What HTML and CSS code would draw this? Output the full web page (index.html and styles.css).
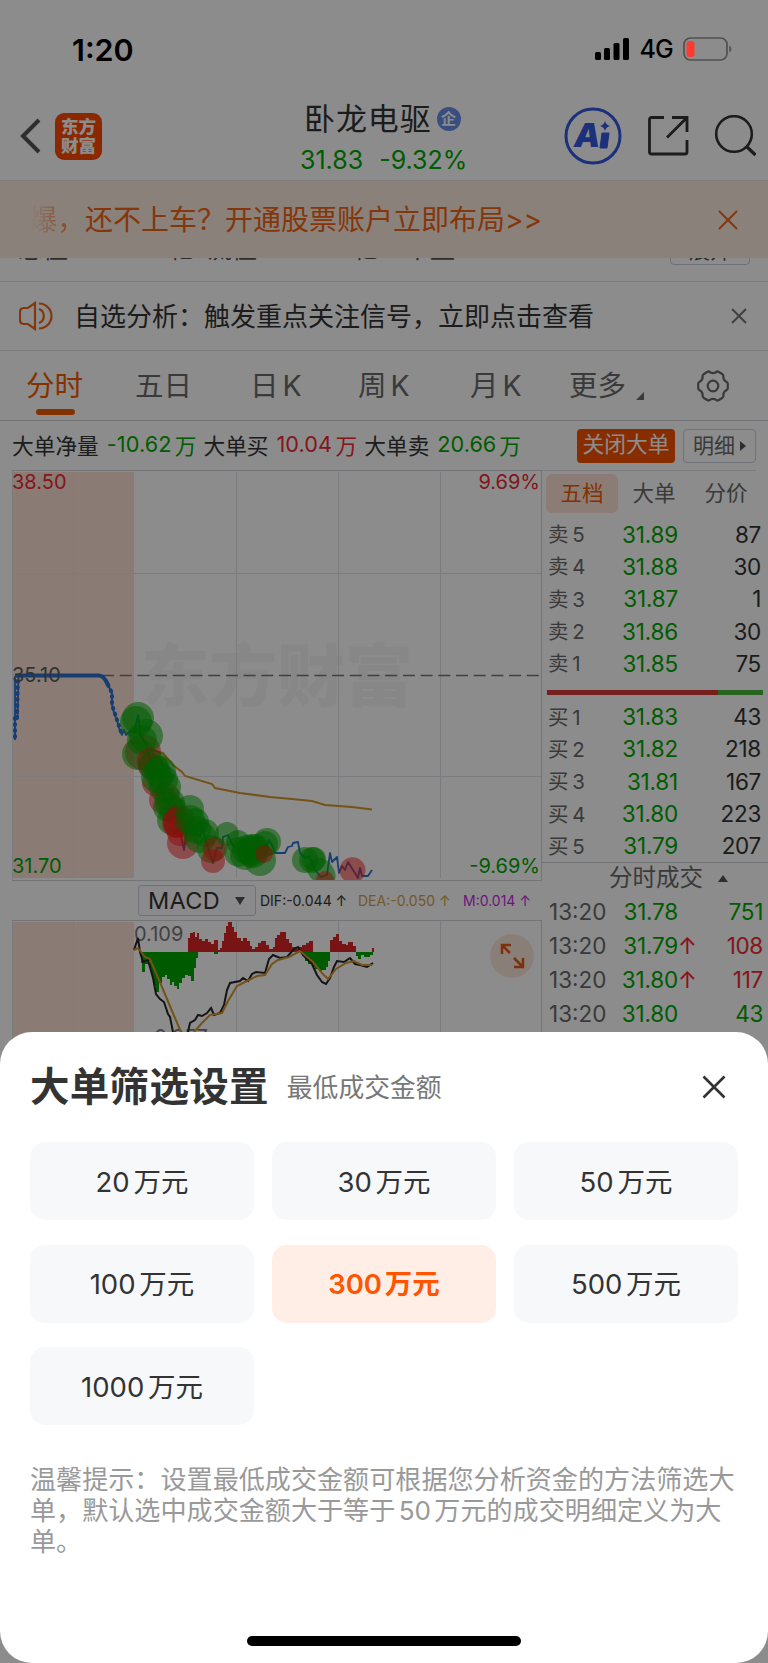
FILE: index.html
```html
<!DOCTYPE html>
<html lang="zh-CN">

<head>
    <meta charset="UTF-8">
    <meta name="viewport" content="width=device-width, initial-scale=1.0">
    <title>卧龙电驱</title>
    <link rel="stylesheet" href="styles.css">
</head>

<body>

    <div class="phone">
        <div class="status">
            <span class="status__time">1:20</span>
            <div class="status__right">
                <svg width="35" height="22" viewBox="0 0 35 22">
                    <rect x="0" y="14" width="6" height="8" rx="1.5" />
                    <rect x="9" y="10" width="6" height="12" rx="1.5" />
                    <rect x="18.500" y="5" width="6" height="17" rx="1.500" />
                    <rect x="28" y="0" width="6" height="22" rx="1.500" />
                </svg>
                <span class="status__net">4G</span>
                <svg width="50" height="24" viewBox="0 0 50 24">
                    <rect x="1" y="1" width="43" height="22" rx="6.500" fill="none" stroke="#505050" stroke-width="1.700" />
                    <rect x="3.500" y="4" width="8" height="16" rx="3" fill="#ff3b30" />
                    <path d="M46.300 8.500a4 4 0 0 1 0 7z" fill="#505050" />
                </svg>
            </div>
        </div>

        <div class="header">
            <svg class="header__back" width="22" height="36" viewBox="0 0 22 36">
                <path d="M19 2 3 18l16 16" fill="none" stroke="#555" stroke-width="4" />
            </svg>
            <div class="logo">东方<br>财富</div>
            <div class="header__stock">
                <div class="header__name">卧龙电驱<span class="badge">企</span></div>
                <div class="header__price"><span>31.83</span><span>-9.32%</span></div>
            </div>
            <div class="header__icons">
                <svg width="58" height="58" viewBox="0 0 58 58">
                    <circle cx="29" cy="29" r="27" fill="none" stroke="#3458e0" stroke-width="3" />
                    <text x="10" y="40" class="ai">A</text>
                    <path d="M38 26h7l-2 15h-7z" fill="#3458e0" stroke="#3458e0" stroke-width="1" stroke-linejoin="round" />
                    <path d="M41 14q1 4 5 5-4 1-5 5-1-4-5-5 4-1 5-5z" fill="#3458e0" />
                </svg>
                <svg width="42" height="42" viewBox="0 0 42 42" fill="none" stroke="#333" stroke-width="2.800">
                    <path d="M17 2.500H4.500a2 2 0 0 0-2 2V37a2 2 0 0 0 2 2H38a2 2 0 0 0 2-2V25M25 2.500h15V17M39.500 3 20 22.500" />
                </svg>
                <svg width="42" height="42" viewBox="0 0 42 42" fill="none" stroke="#333" stroke-width="2.600">
                    <circle cx="20" cy="19" r="17.800" />
                    <path d="m32 31 9.500 9" stroke-width="3.200" />
                </svg>
            </div>
        </div>

        <div class="banner">
            <p class="banner__text"><span class="banner__fade">爆，</span>还不上车？开通股票账户立即布局&gt;&gt;</p>
            <svg width="20" height="20" viewBox="0 0 20 20">
                <path d="m1 1 18 18M19 1 1 19" stroke="#f06414" stroke-width="2" />
            </svg>
        </div>

        <div class="quote">
            <div class="quote__row">
                <span class="quote__a">总值</span>
                <span class="quote__b">10.12亿</span>
                <span class="quote__c">流值</span>
                <span class="quote__d">亿</span>
                <span class="quote__e">市盈</span>
                <span class="quote__btn">展开</span>
            </div>
        </div>

        <div class="notice">
            <svg width="34" height="30" viewBox="0 0 34 30" fill="none" stroke="#f06414" stroke-width="2.200">
                <path d="M16 2v26l-7-5H5q-4 0-4-4v-8q0-4 4-4h4z" />
                <path d="M20 8a7.500 7.500 0 0 1 0 14M20 2.500a12.500 12.500 0 0 1 0 25" />
            </svg>
            <p>自选分析：触发重点关注信号，立即点击查看</p>
            <svg width="16" height="16" viewBox="0 0 16 16">
                <path d="m1 1 14 14M15 1 1 15" stroke="#777" stroke-width="2" />
            </svg>
        </div>

        <div class="tabs">
            <span class="tabs__item tabs__item--on">分时</span>
            <span class="tabs__item">五日</span>
            <span class="tabs__item">日 K</span>
            <span class="tabs__item">周 K</span>
            <span class="tabs__item">月 K</span>
            <span class="tabs__item tabs__item--more">更多</span>
            <svg class="tabs__gear" width="32" height="32" viewBox="0 0 32 32" fill="none" stroke="#6b6b6b" stroke-width="2.200" stroke-linejoin="round">
                <path d="M10.500 1.800Q12 1 13 2.300q3 1.700 6 0 1-1.300 2.500-.5l4 2.500q1.200.8.800 2.500 0 3.500 3 5 1.500.7 1.500 2v4.400q0 1.300-1.500 2-3 1.500-3 5 .4 1.700-.8 2.500l-4 2.500q-1.500.8-2.500-.5-3-1.700-6 0-1 1.300-2.500.5l-4-2.500Q5.300 26.900 5.700 25.200q0-3.500-3-5-1.500-.7-1.500-2v-4.400q0-1.300 1.500-2 3-1.500 3-5-.4-1.700.8-2.500z" />
                <circle cx="16" cy="16" r="5.300" />
            </svg>
        </div>

        <div class="big">
            <span>大单净量</span><b class="down big__n1">-10.62</b><b class="down">万</b>
            <span>大单买</span><b class="up big__n2">10.04</b><b class="up">万</b>
            <span>大单卖</span><b class="down big__n3">20.66</b><b class="down">万</b>
            <div class="big__btns">
                <span class="btn btn--on">关闭大单</span>
                <span class="btn btn--detail">明细<i></i></span>
            </div>
        </div>

        <div class="main">
            <div class="charts">
                <svg class="chart" width="530" height="411" viewBox="0 0 530 411">
                    <rect x="1" y="2" width="121" height="406" fill="#fbe1d6" />
                    <text x="129" y="231" class="watermark">东方财富</text>
                    <path class="grid" d="M.5 0v410M61.500 2v406M224.500 2v406M326.500 2v406M428.500 2v406M0 103.500h530M0 306.500h530" />
                    <path class="frame" d="M0 .5h530M529.500 0v411M0 410.500h530" />
                    <path d="M88 205.500h442" stroke="#757575" stroke-width="1.300" stroke-dasharray="12 5.700" stroke-dashoffset="-2" />
                    <!-- 均价线 -->
                    <path class="avg" d="M126 262 140 280 151 283 161 295 170 302 173 306 200 314 203 318 228 323 258 327 280 329 300 331 313 335 340 337 360 339.500" />
                    <!-- 分时线 -->
                    <path class="price" d="M3 205.500H87q5 0 9 9.500L100 223V235L102 243 105 250 107 258 110 265 112 260 114 265 118 261 122 263 126 245 129 266 133 272 138 290 145 302 150 320 156 334 162 340 167 358 172 380 176 350 182 360 188 367 190 357 194 372 201 393 205 378 210 378 211 367 216 365 220 374 226 380 232 372 239 384 246 378 250 384 257 370 261 377 263 383 273 383 276 377 280 376 281 373 286 372 288 383 293 388 297 386 303 400 309 407 315 405 318 383 320 392 325 387 327 403 330 396 333 400 336 392 341 400 346 408 348 398 350 406 356 406 360 400" />
                    <path class="price price--bold" d="M3 205.500H87q5 0 9 9.500" />
                    <path class="price" d="M3 270V206M5.500 248 6.500 206" />
                    <path class="price price--dots" d="M96 215 100 223V235L105 250 110 265M3 248v22M5 248 6 206" />
                    <g class="buy">
                        <circle cx="131" cy="282" r="18" />
                        <circle cx="143" cy="313" r="13" />
                        <circle cx="151" cy="330" r="14" />
                        <circle cx="155" cy="326" r="13" />
                        <circle cx="171" cy="373" r="16" />
                        <circle cx="168" cy="363" r="13" />
                    </g>
                    <g class="sell">
                        <circle cx="126" cy="248" r="16" />
                        <circle cx="124" cy="252" r="16" />
                        <circle cx="134" cy="266" r="17" />
                        <circle cx="130" cy="270" r="15" />
                        <circle cx="126" cy="284" r="16" />
                    </g>
                    <g class="buy">
                        <circle cx="138" cy="291" r="13" />
                        <circle cx="139" cy="296" r="13" />
                    </g>
                    <g class="sell">
                        <circle cx="141" cy="295" r="15" />
                        <circle cx="148" cy="302" r="16" />
                        <circle cx="146" cy="298" r="12" />
                        <circle cx="145" cy="307" r="16" />
                        <circle cx="151" cy="310" r="15" />
                        <circle cx="153" cy="317" r="16" />
                        <circle cx="158" cy="333" r="15" />
                        <circle cx="156" cy="337" r="15" />
                        <circle cx="161" cy="340" r="14" />
                        <circle cx="160" cy="350" r="15" />
                    </g>
                    <g class="buy">
                        <circle cx="165" cy="353" r="15" />
                        <circle cx="167" cy="351" r="16" />
                        <circle cx="163" cy="357" r="11" />
                    </g>
                    <g class="sell">
                        <circle cx="178" cy="339" r="14" />
                        <circle cx="183" cy="352" r="14" />
                        <circle cx="178" cy="350" r="15" />
                        <circle cx="185" cy="360" r="14" />
                        <circle cx="193" cy="363" r="14" />
                        <circle cx="188" cy="367" r="16" />
                        <circle cx="199" cy="379" r="14" />
                    </g>
                    <g class="buy">
                        <circle cx="203" cy="379" r="12" />
                        <circle cx="201" cy="391" r="12" />
                    </g>
                    <g class="sell">
                        <circle cx="215" cy="364" r="12" />
                        <circle cx="226" cy="372" r="12" />
                        <circle cx="227" cy="382" r="15" />
                        <circle cx="235" cy="380" r="15" />
                        <circle cx="233" cy="385" r="15" />
                        <circle cx="241" cy="382" r="16" />
                        <circle cx="240" cy="380" r="16" />
                        <circle cx="243" cy="378" r="14" />
                        <circle cx="248" cy="390" r="16" />
                        <circle cx="255" cy="372" r="14" />
                        <circle cx="253" cy="374" r="13" />
                        <circle cx="293" cy="390" r="13" />
                        <circle cx="300" cy="390" r="13" />
                        <circle cx="302" cy="389" r="12" />
                        <path d="M294 398a14 14 0 0 1 26-2q5 7 3 14h-22q-5-4-7-12z" />
                    </g>
                    <g class="buy">
                        <circle cx="252" cy="384" r="9" />
                        <path d="M304 410a9 9 0 1 1 18 0z" />
                        <path d="M332 410a13 13 0 1 1 17 0z" />
                    </g>
                    <text x="0" y="19" class="up">38.50</text>
                    <text x="0" y="212" fill="#5c5c5c">35.10</text>
                    <text x="0" y="403" class="down">31.70</text>
                    <text x="528" y="19" class="up" text-anchor="end">9.69%</text>
                    <text x="528" y="403" class="down" text-anchor="end">-9.69%</text>
                </svg>

                <div class="macd">
                    <span class="macd__select">MACD<i></i></span>
                    <span class="macd__dif">DIF:-0.044 ↑</span>
                    <span class="macd__dea">DEA:-0.050 ↑</span>
                    <span class="macd__m">M:0.014 ↑</span>
                </div>

                <svg class="chart" width="530" height="125" viewBox="0 1 530 125">
                    <rect x="1" y="3" width="121" height="124" fill="#fbe1d6" />
                    <path class="grid" d="M.5 1v125M61.500 2v125M224.500 2v125M326.500 2v125M428.500 2v125" />
                    <path class="frame" d="M0 1.500h530M529.500 1v125" />
                    <text x="122" y="22" fill="#777">0.109</text>
                    <text x="133" y="125" fill="#777">-0.257</text>
                    <path fill="#dc2626" d="M176 33V19h2V14h3V13h2V18h2V14h2V20h3V22h3V20h3V23h3V25h3V21h4V33zM205 33V31h3V29h2V22h2V14h2V7h2V3h4V8h2V13h3V19h4V22h2V19h4V22h3V27h2V30h3V28h3V24h3V22h5V26h3V30h4V28h2V19h2V16h3V13h6V20h3V24h3V28h4V30h3V28h3V26h4V24h3V22h4V33zM318 33V21h3V18h3V15h3V22h3V25h4V26h2V23h5V27h3V33zM360 33V29h2v4z" />
                    <path fill="#00a400" d="M129 33V44h1v9h3V45h3V42h2V51h2V58h2V67h2V73h3V64h3V58h3V56h2V60h3V66h2V63h2V67h3V70h2V64h3V59h3V56h3V57h3V62h3V49h2V39h2V33zM202 33v2h4V33zM290 33V37h3V42h3V45h4V48h3V50h4V52h3V51h4V48h2V42h2V33zM344 33V37h2V40h3V36h3V38h6V36h3V33z" />
                    <path fill="none" stroke="#262626" stroke-width="2" d="M122 31 126 19 128 33 131 43 136 41 141 59 144 75 148 80 152 83 156 95 158 98 161 113M176 113 178 104 183 101 186 96 190 97 195 94 199 89 202 96 208 94 212 86 215 71 218 64 228 62 231 59 236 62 240 55 244 53 253 54 257 40 261 36 268 39 275 38 282 30 286 28 291 36 300 45 305 56 310 63 314 65 318 59 322 48 325 42 332 43 338 39 343 45 348 46 355 48 361 44" />
                    <path fill="none" stroke="#d2972c" stroke-width="2" d="M122 31 126 29 133 38 138 40 150 68 160 92 169 113M182 113 190 104 198 96 210 94 216 82 225 67 235 62 245 57 253 56 260 45 266 41 277 38 288 32 301 43 310 54 316 60 324 50 334 44 342 42 350 46 360 46" />
                    <circle cx="500" cy="37" r="22" fill="#fbe6dc" />
                    <path d="M490 35v-9h9M490 26l8 8M511 39v9h-9M511 48l-9-9" fill="none" stroke="#e05a14" stroke-width="2.500" />
                </svg>
            </div>

            <div class="book">
                <div class="book__tabs"><span class="on">五档</span><span>大单</span><span>分价</span></div>
                <div class="book__row"><span>卖 5</span><em>31.89</em><b>87</b></div>
                <div class="book__row"><span>卖 4</span><em>31.88</em><b>30</b></div>
                <div class="book__row"><span>卖 3</span><em>31.87</em><b>1</b></div>
                <div class="book__row"><span>卖 2</span><em>31.86</em><b>30</b></div>
                <div class="book__row"><span>卖 1</span><em>31.85</em><b>75</b></div>
                <div class="book__bar"></div>
                <div class="book__row"><span>买 1</span><em>31.83</em><b>43</b></div>
                <div class="book__row"><span>买 2</span><em>31.82</em><b>218</b></div>
                <div class="book__row"><span>买 3</span><em>31.81</em><b>167</b></div>
                <div class="book__row"><span>买 4</span><em>31.80</em><b>223</b></div>
                <div class="book__row"><span>买 5</span><em>31.79</em><b>207</b></div>
                <div class="book__title">分时成交<i></i></div>
                <div class="deal"><span>13:20</span><em>31.78</em><b class="down">751</b></div>
                <div class="deal"><span>13:20</span><em>31.79</em><i>↑</i><b class="up">108</b></div>
                <div class="deal"><span>13:20</span><em>31.80</em><i>↑</i><b class="up">117</b></div>
                <div class="deal"><span>13:20</span><em>31.80</em><b class="down">43</b></div>
            </div>
        </div>

        <div class="mask"></div>

        <div class="sheet">
            <div class="sheet__head">
                <h2>大单筛选设置</h2>
                <span>最低成交金额</span>
                <svg width="24" height="24" viewBox="0 0 24 24">
                    <path d="m1.500 1.500 21 21M22.500 1.500l-21 21" stroke="#333" stroke-width="2.600" />
                </svg>
            </div>
            <div class="sheet__grid">
                <button>20 万元</button>
                <button>30 万元</button>
                <button>50 万元</button>
                <button>100 万元</button>
                <button class="on">300 万元</button>
                <button>500 万元</button>
                <button>1000 万元</button>
            </div>
            <p class="sheet__tip">温馨提示：设置最低成交金额可根据您分析资金的方法筛选大<br>单，默认选中成交金额大于等于 50 万元的成交明细定义为大<br>单。</p>
            <div class="sheet__home"></div>
        </div>
    </div>

</body>

</html>
```
FILE: styles.css
```css
* {
    box-sizing: border-box;
}

body {
    margin: 0;
    font-family: Inter, "Noto Sans CJK SC", sans-serif;
    color: #333;
    background: #fff;
}

p,
h2 {
    margin: 0;
}

b,
em,
i {
    font-weight: 400;
    font-style: normal;
}

svg {
    display: block;
    flex: none;
}

.phone {
    position: relative;
    width: 768px;
    height: 1663px;
    overflow: hidden;
    white-space: nowrap;
}

.up {
    color: #f02832;
    fill: #f02832;
}

.down {
    color: #00a800;
    fill: #00a800;
}

/* 遮罩 */
.mask {
    position: absolute;
    inset: 0;
    background: rgba(0, 0, 0, .45);
    z-index: 1;
}

/* 状态栏 在遮罩上面 */
.status {
    position: relative;
    z-index: 2;
    height: 92px;
    padding: 6px 35px 0 72px;
    display: flex;
    align-items: center;
    justify-content: space-between;
    color: #000;
}

.status__time {
    font-size: 30.500px;
    font-weight: 600;
}

.status__right {
    display: flex;
    align-items: center;
}

.status__net {
    font-size: 25px;
    font-weight: 500;
    letter-spacing: -.8px;
    margin: 0 10px 0 10px;
}

.header {
    height: 89px;
    border-bottom: 1px solid #e3e5ea;
    display: flex;
    align-items: center;
    padding: 0 12px 0 20px;
}

.logo {
    width: 47px;
    height: 47px;
    margin-left: 13px;
    border-radius: 9px;
    background: #ff4a00;
    color: #fff;
    font-size: 17.5px;
    font-weight: 900;
    line-height: 19px;
    text-align: center;
    padding-top: 4px;
}

.header__stock {
    margin-left: 198px;
    width: 180px;
    padding-top: 6px;
}

.header__name {
    display: flex;
    align-items: center;
    font-size: 31px;
    line-height: 40px;
    padding-left: 4px;
    letter-spacing: .9px;
}

.badge {
    width: 24px;
    height: 24px;
    border-radius: 50%;
    background: #688fe8;
    color: #fff;
    font-size: 15px;
    font-weight: 700;
    line-height: 23px;
    text-align: center;
    letter-spacing: 0;
    margin-left: 5px;
}

.header__price {
    display: flex;
    gap: 16px;
    font-size: 25px;
    line-height: 40px;
    color: #00a800;
    padding-top: 1px;
}

.header__icons {
    display: flex;
    align-items: center;
    margin-left: auto;
    gap: 25px;
}

.ai {
    font-family: Inter, sans-serif;
    font-size: 33px;
    font-weight: 900;
    font-style: italic;
    fill: #3458e0;
}

.banner {
    height: 77px;
    display: flex;
    align-items: center;
    justify-content: space-between;
    padding: 0 30px 0 29px;
    background: #fdebe1;
    color: #f06414;
    font-size: 28px;
}

.banner__text {
    padding-bottom: 3px;
}

.banner__fade {
    background: linear-gradient(90deg, rgba(240, 100, 20, 0), #f06414);
    -webkit-background-clip: text;
    background-clip: text;
    color: transparent;
}

.quote {
    height: 24px;
    overflow: hidden;
    border-bottom: 1px solid #dddfe4;
}

/* 滚动到一半的行 只露出底部 */
.quote__row {
    display: flex;
    margin-top: -26px;
    height: 33px;
    line-height: 34px;
    padding-left: 18px;
    font-size: 25px;
    color: #555;
}

.quote__a {
    width: 96px;
}

.quote__b {
    width: 93px;
}

.quote__c {
    width: 147px;
}

.quote__d,
.quote__e {
    width: 51px;
}

.quote__btn {
    width: 80px;
    margin-left: auto;
    margin-right: 18px;
    border: 1px solid #c9cede;
    border-radius: 4px;
    font-size: 21px;
    line-height: 36px;
    text-align: center;
}

.notice {
    height: 69px;
    border-bottom: 1px solid #dddfe4;
    display: flex;
    align-items: center;
    padding: 0 21px 0 19px;
    font-size: 26px;
}

.notice p {
    flex: 1;
    padding: 0 0 4px 21px;
}

.tabs {
    height: 70px;
    border-bottom: 1px solid #cdd0d6;
    display: flex;
    padding-left: 26px;
    font-size: 28.5px;
    line-height: 69px;
    color: #6b6b6b;
    word-spacing: -4px;
}

.tabs__item {
    position: relative;
    width: 109px;
}

.tabs__item:nth-child(2) {
    width: 115px;
}

.tabs__item:nth-child(3) {
    width: 108px;
}

.tabs__item:nth-child(4) {
    width: 112px;
}

.tabs__item:nth-child(5) {
    width: 99px;
}

.tabs__item--on {
    color: #f05a00;
}

.tabs__item--on::after {
    content: "";
    position: absolute;
    left: 10px;
    bottom: 5px;
    width: 39px;
    height: 6px;
    border-radius: 3px;
    background: #f05a00;
}

.tabs__item--more {
    width: 128px;
}

.tabs__item--more::after {
    content: "";
    position: absolute;
    left: 67px;
    top: 41px;
    border-bottom: 8px solid #6b6b6b;
    border-left: 8px solid transparent;
}

.tabs__gear {
    margin-top: 19px;
}

.big {
    height: 49px;
    display: flex;
    align-items: center;
    padding: 0 12px;
    font-size: 21.700px;
}

.big > span,
.big > b {
    padding-bottom: 3px;
}

.big > span {
    margin-right: 8px;
}

.big > b + b {
    margin: 0 7px 0 3px;
}

.big__n1 {
    width: 65px;
    letter-spacing: .1px;
}

.big__n2 {
    width: 56px;
}

.big__n3 {
    width: 59px;
}

.big__btns {
    display: flex;
    gap: 8px;
    margin-left: auto;
}

.btn {
    height: 34px;
    line-height: 31px;
    border-radius: 4px;
    text-align: center;
}

.btn--on {
    width: 98px;
    background: #f85200;
    color: #fff;
}

.btn--detail {
    width: 73px;
    border: 1px solid #c9cede;
    color: #6b6b6b;
    display: flex;
    align-items: center;
    justify-content: center;
    font-size: 21px;
}

.btn--detail i {
    border: 5px solid transparent;
    border-left: 6px solid #555;
    border-right: 0;
    margin-left: 5px;
}

.main {
    display: flex;
}

.charts {
    width: 530px;
    margin-left: 12px;
}

.chart text {
    font-size: 20px;
}

.chart .watermark {
    font-size: 68px;
    font-weight: 900;
    fill: #000;
    fill-opacity: .035;
}

.grid {
    fill: none;
    stroke: #dfe2ea;
}

.frame {
    fill: none;
    stroke: #cfd3db;
}

.price {
    fill: none;
    stroke: #2871d1;
    stroke-width: 1.8;
    stroke-linejoin: round;
}

.price--bold {
    stroke-width: 4.2;
}

.price--dots {
    stroke-width: 4;
    stroke-dasharray: 1 5;
    stroke-linecap: round;
}

.avg {
    fill: none;
    stroke: #d2972c;
    stroke-width: 2;
}

.buy {
    fill: rgba(255, 24, 24, .5);
}

.sell {
    fill: rgba(0, 170, 0, .54);
}

.macd {
    height: 39px;
    display: flex;
    align-items: center;
    padding-left: 126px;
    font-size: 14px;
}

.macd__select {
    flex: none;
    width: 118px;
    height: 31px;
    display: flex;
    align-items: center;
    justify-content: space-between;
    padding: 0 10px 0 9px;
    border: 1px solid #c9cede;
    border-radius: 3px;
    background: #fcfcff;
    font-size: 23.500px;
    letter-spacing: .3px;
    margin-right: 4px;
}

.macd__select i {
    border: 5px solid transparent;
    border-top: 8px solid #555;
    border-bottom: 0;
}

.macd__dif {
    width: 98px;
}

.macd__dea {
    width: 105px;
    color: #d2a04a;
}

.macd__m {
    color: #c828dc;
}

.book {
    width: 226px;
    font-size: 22.500px;
}

.book__tabs {
    display: flex;
    border-top: 1px solid #dfe2ea;
    width: 214px;
    padding: 3px 0 0 4px;
    font-size: 21.500px;
    line-height: 39px;
    color: #6b6b6b;
    margin-bottom: 5px;
}

.book__tabs span {
    width: 72px;
    height: 39px;
    flex: none;
    text-align: center;
    border-radius: 6px;
}

.book__tabs .on {
    background: #fde4d6;
    color: #f05a00;
}

.book__row,
.deal {
    display: flex;
    height: 32.300px;
    align-items: center;
    padding: 0 7px 0 6px;
}

.book__row span {
    width: 60px;
    font-size: 20.500px;
    color: #6b6b6b;
    word-spacing: -2px;
    padding-bottom: 2px;
}

.book__row em,
.deal em {
    width: 70px;
    text-align: right;
    color: #00a800;
    letter-spacing: -.2px;
}

.book__row b,
.deal b {
    flex: 1;
    text-align: right;
    letter-spacing: -.3px;
}

.book__bar {
    height: 5px;
    margin: 11px 5px 5px;
    background: linear-gradient(135deg, #d63a3a 0 174px, #4bb43c 0);
    background: linear-gradient(90deg, #d63a3a 79%, #4bb43c 79%);
}

.book__title {
    border-top: 1px solid #cfd3db;
    height: 32px;
    line-height: 32px;
    padding-left: 67px;
    font-size: 23.500px;
    color: #6b6b6b;
    display: flex;
    align-items: center;
}

.book__title i {
    border: 5px solid transparent;
    border-bottom: 7px solid #555;
    border-top: 0;
    margin-left: 15px;
}

.deal {
    height: 34.200px;
    padding: 0 5px 0 7px;
}

.deal span {
    width: 59px;
    color: #6b6b6b;
}

.deal i {
    width: 16px;
    color: #f02832;
}

/* 弹窗 */
.sheet {
    position: absolute;
    z-index: 3;
    left: 0;
    right: 0;
    bottom: 0;
    height: 631px;
    border-radius: 32px;
    background: #fff;
    padding: 28px 30px 0;
}

.sheet__head {
    display: flex;
    align-items: center;
    height: 54px;
}

.sheet__head h2 {
    font-size: 39.500px;
    font-weight: 700;
    line-height: 54px;
    letter-spacing: .3px;
}

.sheet__head span {
    margin-left: 18px;
    font-size: 25.800px;
    color: #777;
    padding-bottom: 3px;
}

.sheet__head svg {
    margin: 0 12px 0 auto;
}

.sheet__grid {
    display: grid;
    grid-template-columns: repeat(3, 224px);
    gap: 24.500px 18px;
    margin-top: 28px;
}

.sheet__grid button {
    height: 78px;
    border: 0;
    border-radius: 15px;
    background: #f7f8fa;
    color: #333;
    font-family: inherit;
    font-size: 27.500px;
    word-spacing: -4px;
    padding-bottom: 4px;
}

.sheet__grid .on {
    background: #ffeee5;
    color: #ff5500;
    font-weight: 600;
}

.sheet__tip {
    margin-top: 40px;
    font-size: 26.100px;
    line-height: 30.900px;
    color: #999;
    word-spacing: -4px;
}

.sheet__home {
    position: absolute;
    left: 247px;
    bottom: 17px;
    width: 274px;
    height: 10px;
    border-radius: 5px;
    background: #000;
}
```
